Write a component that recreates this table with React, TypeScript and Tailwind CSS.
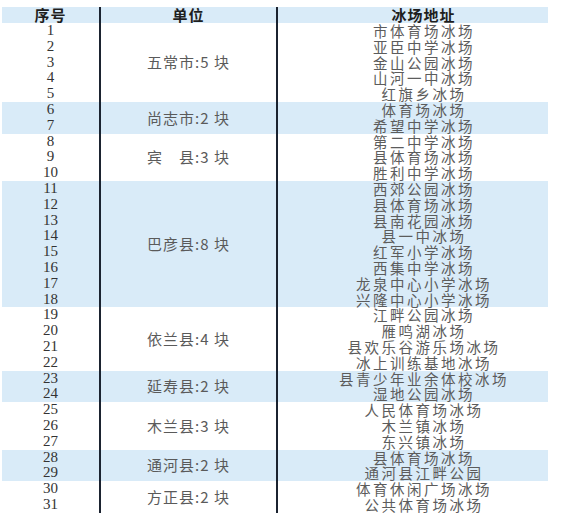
import React from "react";

interface Group {
  unit: string;
  places: string[];
  shaded: boolean;
}

const groups: Group[] = [
  {
    unit: "五常市:5 块",
    places: ["市体育场冰场", "亚臣中学冰场", "金山公园冰场", "山河一中冰场", "红旗乡冰场"],
    shaded: false,
  },
  { unit: "尚志市:2 块", places: ["体育场冰场", "希望中学冰场"], shaded: true },
  {
    unit: "宾\u3000县:3 块",
    places: ["第二中学冰场", "县体育场冰场", "胜利中学冰场"],
    shaded: false,
  },
  {
    unit: "巴彦县:8 块",
    places: [
      "西郊公园冰场",
      "县体育场冰场",
      "县南花园冰场",
      "县一中冰场",
      "红军小学冰场",
      "西集中学冰场",
      "龙泉中心小学冰场",
      "兴隆中心小学冰场",
    ],
    shaded: true,
  },
  {
    unit: "依兰县:4 块",
    places: ["江畔公园冰场", "雁鸣湖冰场", "县欢乐谷游乐场冰场", "冰上训练基地冰场"],
    shaded: false,
  },
  { unit: "延寿县:2 块", places: ["县青少年业余体校冰场", "湿地公园冰场"], shaded: true },
  {
    unit: "木兰县:3 块",
    places: ["人民体育场冰场", "木兰镇冰场", "东兴镇冰场"],
    shaded: false,
  },
  { unit: "通河县:2 块", places: ["县体育场冰场", "通河县江畔公园"], shaded: true },
  { unit: "方正县:2 块", places: ["体育休闲广场冰场", "公共体育场冰场"], shaded: false },
];

const cjk = "font-['Noto_Sans_CJK_SC',sans-serif]";

const App = () => {
  let n = 0;
  return (
    <div className="w-[569px] h-[532px] bg-white pt-[7px] pl-[2px]">
      <div className="w-[546px]">
        <div className={`flex h-[16px] bg-[#d9ebf8] text-[#1e1e1e] font-bold text-[15px] tracking-[1px] leading-[16px] ${cjk}`}>
          <div className="w-[99px] border-r-2 border-[#1b2330] text-center">序号</div>
          <div className="w-[177px] border-r-2 border-[#1b2330] text-center">单位</div>
          <div className="flex-1 pl-[21px] text-center">冰场地址</div>
        </div>
        {groups.map((g) => (
          <div
            key={g.unit}
            className={`flex ${g.shaded ? "bg-[#d9ebf8]" : "bg-white"}`}
          >
            <div className="w-[99px] border-r-2 border-[#1b2330] flex flex-col">
              {g.places.map(() => {
                n += 1;
                return (
                  <div
                    key={n}
                    className="h-[15.8px] leading-[15.8px] text-center text-[15px] text-[#333] font-['Liberation_Serif',serif]"
                  >
                    {n}
                  </div>
                );
              })}
            </div>
            <div
              className={`w-[177px] border-r-2 border-[#1b2330] flex items-center justify-center text-[15px] tracking-[1px] text-[#5a5a5a] ${cjk}`}
            >
              {g.unit}
            </div>
            <div className={`flex-1 pl-[22px] flex flex-col text-[14.5px] tracking-[2.5px] text-[#5c5c5c] ${cjk}`}>
              {g.places.map((p, i) => (
                <div key={i} className="h-[15.8px] leading-[15.8px] text-center whitespace-nowrap">
                  {p}
                </div>
              ))}
            </div>
          </div>
        ))}
      </div>
    </div>
  );
};

export default App;
